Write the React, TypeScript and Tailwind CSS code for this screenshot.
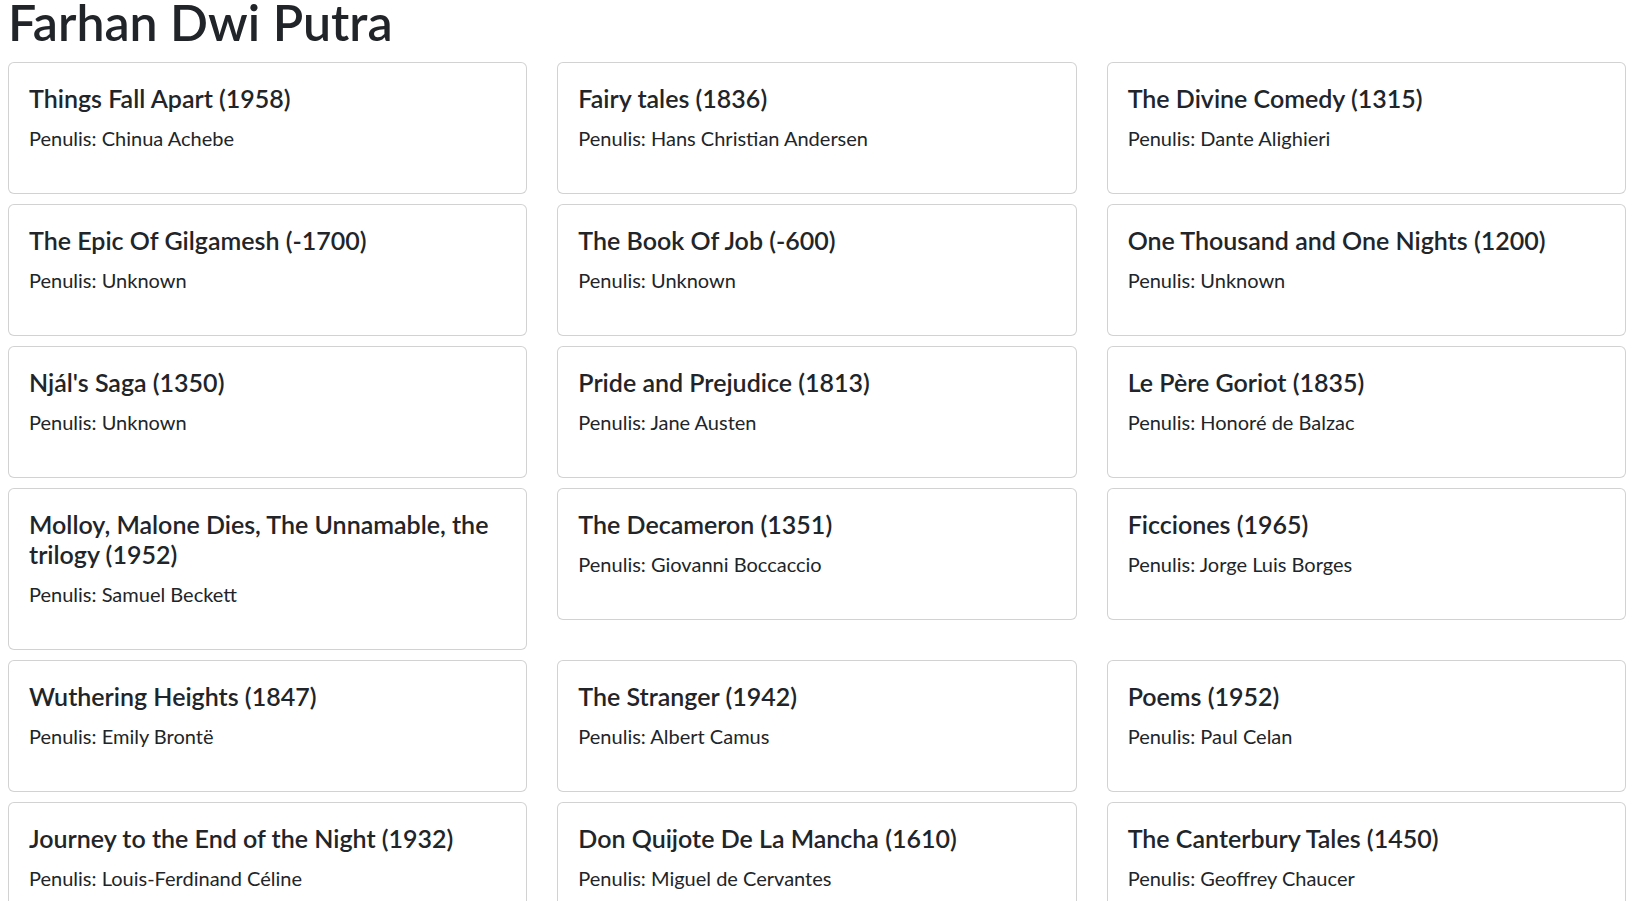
const books = [
  { title: "Things Fall Apart", year: 1958, author: "Chinua Achebe" },
  { title: "Fairy tales", year: 1836, author: "Hans Christian Andersen" },
  { title: "The Divine Comedy", year: 1315, author: "Dante Alighieri" },
  { title: "The Epic Of Gilgamesh", year: -1700, author: "Unknown" },
  { title: "The Book Of Job", year: -600, author: "Unknown" },
  { title: "One Thousand and One Nights", year: 1200, author: "Unknown" },
  { title: "Njál's Saga", year: 1350, author: "Unknown" },
  { title: "Pride and Prejudice", year: 1813, author: "Jane Austen" },
  { title: "Le Père Goriot", year: 1835, author: "Honoré de Balzac" },
  { title: "Molloy, Malone Dies, The Unnamable, the trilogy", year: 1952, author: "Samuel Beckett" },
  { title: "The Decameron", year: 1351, author: "Giovanni Boccaccio" },
  { title: "Ficciones", year: 1965, author: "Jorge Luis Borges" },
  { title: "Wuthering Heights", year: 1847, author: "Emily Brontë" },
  { title: "The Stranger", year: 1942, author: "Albert Camus" },
  { title: "Poems", year: 1952, author: "Paul Celan" },
  { title: "Journey to the End of the Night", year: 1932, author: "Louis-Ferdinand Céline" },
  { title: "Don Quijote De La Mancha", year: 1610, author: "Miguel de Cervantes" },
  { title: "The Canterbury Tales", year: 1450, author: "Geoffrey Chaucer" },
];

export default function App() {
  return (
    <div className="min-h-screen bg-white pl-2 pr-[6px] font-['Lato',sans-serif] text-[#212529]">
      <h1 className="-mt-[8px] mb-[10px] text-[50px] leading-[60px] font-semibold">Farhan Dwi Putra</h1>

      <div className="grid grid-cols-3 items-start gap-x-[30px] gap-y-[10px]">
        {books.map((book) => (
          <div key={book.title} className="rounded-[6px] border border-black/[0.175] bg-white p-5">
            <h5 className="mb-[10px] text-[25px] leading-[30px] font-semibold">
              {book.title} ({book.year})
            </h5>
            <p className="mb-5 text-[20px] leading-[30px]">Penulis: {book.author}</p>
          </div>
        ))}
      </div>
    </div>
  );
}
